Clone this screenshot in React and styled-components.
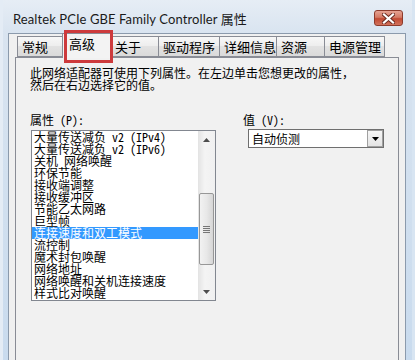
import styled, { createGlobalStyle } from 'styled-components'

const cjk = `"Noto Sans CJK SC", "Noto Sans", sans-serif`
const simsun = `"Noto Sans Mono CJK SC", "Noto Sans CJK SC", "Liberation Mono", monospace`

const GlobalStyle = createGlobalStyle`
  body {
    margin: 0;
    background: #fff;
  }
`

const tabs = [
  { label: '常规', w: 48 },
  { label: '高级', w: 51, active: true },
  { label: '关于', w: 49 },
  { label: '驱动程序', w: 62 },
  { label: '详细信息', w: 58 },
  { label: '资源', w: 49 },
  { label: '电源管理', w: 61 },
]

const items = [
  '大量传送减负 v2 (IPv4)',
  '大量传送减负 v2 (IPv6)',
  '关机 网络唤醒',
  '环保节能',
  '接收端调整',
  '接收缓冲区',
  '节能乙太网路',
  '巨型帧',
  '连接速度和双工模式',
  '流控制',
  '魔术封包唤醒',
  '网络地址',
  '网络唤醒和关机连接速度',
  '样式比对唤醒',
]

const Window = styled.div`
  width: 415px;
  height: 360px;
  box-sizing: border-box;
  overflow: hidden;
  display: flex;
  flex-direction: column;
  padding: 0 9px 0 8px;
  background: linear-gradient(#e6edf5, #d9e4f0 33px, #c9dbee);
  box-shadow: inset 3px 0 0 #e4ecf5, inset -3px 0 0 #d8e5f2;
`

const TitleBar = styled.div`
  height: 33px;
  display: flex;
  align-items: flex-start;
  justify-content: space-between;
  padding: 0 3px 0 5px;
`

const Title = styled.div`
  padding-top: 10px;
  font: 13px/18px "Lato", ${cjk};
  color: #1a1a1a;
  letter-spacing: 0.1px;
`

const CloseButton = styled.div`
  margin-top: 10px;
  width: 29px;
  height: 16px;
  box-sizing: border-box;
  border: 1px solid #8d3b2c;
  border-radius: 3px;
  background: linear-gradient(#e6a394, #d47a65 45%, #c24a33 55%, #d2725c);
  display: flex;
  align-items: center;
  justify-content: center;
`

const Body = styled.div`
  flex: 1;
  display: flex;
  flex-direction: column;
  background: #f0f0f0;
  border: 1px solid #8b9aac;
  border-bottom: none;
  padding: 0 6px;
`

const TabStrip = styled.div`
  display: flex;
  align-items: flex-end;
  height: 23px;
  padding-left: 2px;
`

const Tab = styled.div`
  position: relative;
  box-sizing: border-box;
  width: ${p => p.$w}px;
  height: ${p => (p.$active ? 25 : 21)}px;
  margin: 0 ${p => (p.$active ? -2 : 0)}px ${p => (p.$active ? -1 : 0)}px ${p => (p.$active ? -3 : -1)}px;
  padding: ${p => (p.$active ? '1px 0 0 6px' : '1px 0 0 4px')};
  border: 1px solid #898c95;
  border-bottom: ${p => (p.$active ? 'none' : '1px solid #898c95')};
  background: ${p => (p.$active ? '#f3f3f3' : 'linear-gradient(#f7f7f7, #ededed 50%, #e2e2e2 50%, #dadada)')};
  font: 13px/17px ${cjk};
  white-space: nowrap;
  color: #000;
  z-index: ${p => (p.$active ? 2 : 1)};
  &:first-child {
    margin-left: 0;
  }
`

const Highlight = styled.div`
  position: absolute;
  top: -4px;
  left: 1px;
  right: -1px;
  bottom: -5px;
  border: 3px solid #cd3a3c;
`

const Panel = styled.div`
  flex: 1;
  border: 1px solid #898c95;
  border-bottom: none;
  background: #f1f1f1;
  padding: 9px 0 0 14px;
`

const Description = styled.p`
  margin: 0;
  font: 12px/12px ${cjk};
  color: #000;
`

const Fields = styled.div`
  display: flex;
  margin-top: 23px;
`

const Column = styled.div`
  display: flex;
  flex-direction: column;
  margin-left: ${p => p.$offset || 0}px;
`

const Label = styled.div`
  font: 12px/12px ${simsun};
  color: #000;
`

const ListBox = styled.div`
  margin: 4px 0 0 1px;
  width: 185px;
  height: 171px;
  box-sizing: border-box;
  border: 1px solid #828790;
  background: #fff;
  display: flex;
`

const Items = styled.div`
  flex: 1;
  display: flex;
  flex-direction: column;
`

const Item = styled.div`
  height: 12px;
  padding-left: 2px;
  font: 12px/12px ${simsun};
  white-space: nowrap;
  color: ${p => (p.$selected ? '#fff' : '#000')};
  background: ${p => (p.$selected ? '#3399ff' : 'transparent')};
`

const ScrollBar = styled.div`
  width: 17px;
  display: flex;
  flex-direction: column;
  background: linear-gradient(to right, #e3e3e3, #f4f4f4 40%, #f0f0f0);
`

const ArrowButton = styled.div`
  height: 17px;
  display: flex;
  align-items: center;
  justify-content: center;
`

const Track = styled.div`
  flex: 1;
`

const Thumb = styled.div`
  margin: ${p => p.$top}px 1px 0;
  height: ${p => p.$height}px;
  box-sizing: border-box;
  border: 1px solid #979797;
  border-radius: 2px;
  background: linear-gradient(to right, #f2f2f2, #e8e8e8 50%, #d6d6d6);
  display: flex;
  align-items: center;
  justify-content: center;
`

const Combo = styled.div`
  margin: 3px 0 0 5px;
  width: 136px;
  height: 19px;
  box-sizing: border-box;
  border: 1px solid #6f6f6f;
  background: #fff;
  display: flex;
  align-items: center;
  font: 12px/12px ${cjk};
  padding-left: 3px;
`

const ComboText = styled.span`
  flex: 1;
`

const DropButton = styled.div`
  width: 16px;
  height: 17px;
  box-sizing: border-box;
  border: 1px solid #a0a0a0;
  background: linear-gradient(#f6f6f6, #e4e4e4);
  display: flex;
  align-items: center;
  justify-content: center;
`

const Arrow = ({ up, color = '#4d4d4d' }) => (
  <svg width="7" height="4" viewBox="0 0 7 4">
    <path d={up ? 'M0 4 L3.5 0 L7 4 Z' : 'M0 0 L7 0 L3.5 4 Z'} fill={color} />
  </svg>
)

const Grip = () => (
  <svg width="7" height="7" viewBox="0 0 7 7">
    {[0, 2, 4, 6].map(y => (
      <rect key={y} x="0" y={y} width="7" height="1" fill="#777" />
    ))}
  </svg>
)

const CloseGlyph = () => (
  <svg width="13" height="11" viewBox="0 0 13 11">
    <path d="M2 1.5 L11 9.5 M11 1.5 L2 9.5" stroke="#6b2a20" strokeWidth="4" strokeLinecap="square" />
    <path d="M2 1.5 L11 9.5 M11 1.5 L2 9.5" stroke="#fff" strokeWidth="2.2" strokeLinecap="square" />
  </svg>
)

export default function App() {
  return (
    <>
      <GlobalStyle />
      <Window>
        <TitleBar>
          <Title>Realtek PCIe GBE Family Controller 属性</Title>
          <CloseButton>
            <CloseGlyph />
          </CloseButton>
        </TitleBar>
        <Body>
          <TabStrip>
            {tabs.map(t => (
              <Tab key={t.label} $w={t.w} $active={t.active}>
                {t.label}
                {t.active && <Highlight />}
              </Tab>
            ))}
          </TabStrip>
          <Panel>
            <Description>
              此网络适配器可使用下列属性。在左边单击您想更改的属性，
              <br />
              然后在右边选择它的值。
            </Description>
            <Fields>
              <Column>
                <Label>属性 (P):</Label>
                <ListBox>
                  <Items>
                    {items.map(item => (
                      <Item key={item} $selected={item === '连接速度和双工模式'}>
                        {item}
                      </Item>
                    ))}
                  </Items>
                  <ScrollBar>
                    <ArrowButton>
                      <Arrow up />
                    </ArrowButton>
                    <Track>
                      <Thumb $top={45} $height={72}>
                        <Grip />
                      </Thumb>
                    </Track>
                    <ArrowButton>
                      <Arrow />
                    </ArrowButton>
                  </ScrollBar>
                </ListBox>
              </Column>
              <Column $offset={27}>
                <Label>值 (V):</Label>
                <Combo>
                  <ComboText>自动侦测</ComboText>
                  <DropButton>
                    <Arrow color="#000" />
                  </DropButton>
                </Combo>
              </Column>
            </Fields>
          </Panel>
        </Body>
      </Window>
    </>
  )
}
